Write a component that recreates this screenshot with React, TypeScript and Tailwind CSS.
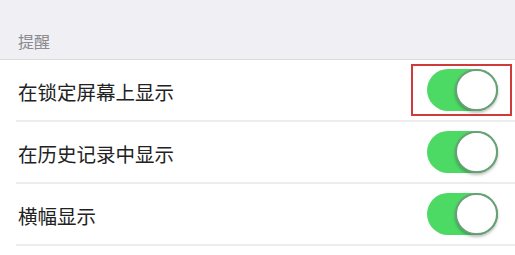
const rows = [
  { label: "在锁定屏幕上显示", marked: true },
  { label: "在历史记录中显示", marked: false },
  { label: "横幅显示", marked: false },
];

function Toggle() {
  return (
    <div className="relative h-[42px] w-[71px] rounded-full bg-[#4cd964]">
      <div className="absolute right-0 top-0 h-[42px] w-[43px] rounded-full border-2 border-[#6a9f78] bg-white shadow-[0_2px_3px_rgba(0,0,0,0.25)]" />
    </div>
  );
}

export default function App() {
  return (
    <div
      className="h-[255px] w-[515px] overflow-hidden bg-white"
      style={{ fontFamily: '"Noto Sans CJK SC", "Noto Sans", sans-serif' }}
    >
      <div className="flex h-[60px] items-end border-b border-[#dcdce0] bg-[#efeff4] px-[18px] pb-[10px]">
        <span className="text-[16px] leading-none text-[#8a8a8f]">提醒</span>
      </div>
      <div className="pl-[16px]">
        {rows.map((row) => (
          <div
            key={row.label}
            className="flex h-[62px] items-center justify-between border-b-2 border-[#ececec] pr-[17px]"
          >
            <span className="pl-[2px] pt-[3px] text-[19.5px] leading-none text-[#222]">{row.label}</span>
            <div className="relative">
              <Toggle />
              {row.marked && (
                <div className="absolute -left-[16px] -right-[14px] -top-[5px] -bottom-[5px] border-2 border-[#cf3b3b]" />
              )}
            </div>
          </div>
        ))}
      </div>
    </div>
  );
}
